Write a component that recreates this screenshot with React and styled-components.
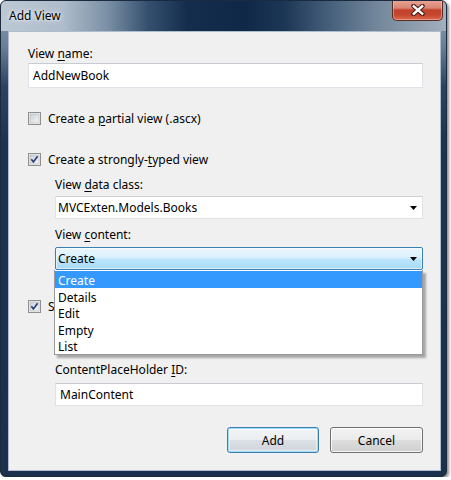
import React from "react";
import styled, { createGlobalStyle } from "styled-components";

const Global = createGlobalStyle`
  html, body { margin: 0; padding: 0; background: #ffffff; }
  body { font-family: "Noto Sans", "Segoe UI", sans-serif; font-size: 12px; color: #000; }
  * { box-sizing: border-box; }
  u { text-decoration-thickness: 1px; text-underline-offset: 2px; }
`;

const Window = styled.div`
  width: 447px;
  height: 477px;
  border: 1px solid #1b2a3c;
  border-radius: 6px;
  display: flex;
  flex-direction: column;
  overflow: hidden;
  background-color: #1c324e;
  background-image: linear-gradient(180deg, #8fa0b2 0px, #6a7f97 45px, #2b4361 85px, #1d3451 140px, #1a304c 100%);
  box-shadow: 2px 2px 3px rgba(0, 0, 0, 0.45);
`;

const TitleBar = styled.div`
  height: 30px;
  flex: none;
  display: flex;
  align-items: flex-start;
  padding-left: 8px;
  padding-right: 3px;
  background-color: #102949;
  background-image: linear-gradient(90deg, #bcc8d4 0%, #aebccb 14%, #7a8fa5 24%, #35506f 33%, #142d4d 42%, #0f2848 55%, #1d3756 64%, #46607c 74%, #71859a 84%, #8e9dad 93%, #a2afbd 100%);
`;

const Title = styled.div`
  margin-top: 7px;
  font-size: 12px;
  line-height: 16px;
  color: #000;
  text-shadow: 0 0 6px rgba(255, 255, 255, 0.9), 0 0 3px rgba(255, 255, 255, 0.9);
`;

const CloseButton = styled.div`
  margin-left: auto;
  margin-top: -1px;
  width: 51px;
  height: 21px;
  border: 1px solid #5a2a24;
  border-top: none;
  border-radius: 0 0 5px 5px;
  background: linear-gradient(180deg, #e9a797 0%, #d88673 40%, #c2412c 50%, #c5472f 75%, #dd6a4f 100%);
  box-shadow: inset 0 0 0 1px rgba(255, 210, 200, 0.45);
  display: flex;
  align-items: center;
  justify-content: center;
`;

const Client = styled.div`
  flex: 1;
  margin: 0 5px 5px 7px;
  background: #f0f0f0;
  border: 1px solid #aebccb;
  padding: 0 17px 0 19px;
  display: flex;
  flex-direction: column;
`;

const Label = styled.div`
  margin-top: ${(p) => p.$mt || 0}px;
  line-height: 15px;
  height: 15px;
  white-space: nowrap;
`;

const TextBox = styled.div`
  margin-top: ${(p) => p.$mt || 0}px;
  height: ${(p) => p.$h || 23}px;
  flex: ${(p) => (p.$grow ? 1 : "none")};
  background: #fff;
  border: 1px solid #dfe3e8;
  border-top-color: #c8ccd2;
  padding-left: 4px;
  display: flex;
  align-items: center;
  white-space: nowrap;
`;

const CheckRow = styled.div`
  margin-top: ${(p) => p.$mt || 0}px;
  height: 15px;
  display: flex;
  align-items: center;
  gap: 7px;
  white-space: nowrap;
  line-height: 15px;
`;

const Indent = styled.div`
  display: flex;
  flex-direction: column;
  padding-left: 27px;
`;

const Combo = styled.div`
  margin-top: ${(p) => p.$mt || 0}px;
  height: 23px;
  background: #fff;
  border: 1px solid #dfe3e8;
  border-top-color: #cdd1d6;
  padding-left: 2px;
  padding-right: 5px;
  display: flex;
  align-items: center;
  justify-content: space-between;
  white-space: nowrap;
`;

const DropWrap = styled.div`
  margin-top: ${(p) => p.$mt || 0}px;
  position: relative;
  z-index: 5;
`;

const FocusCombo = styled.div`
  height: 23px;
  border: 1px solid #3c7fb1;
  border-radius: 2px;
  background: linear-gradient(180deg, #eaf6fd 0%, #d9f0fc 48%, #bee6fd 52%, #a7d9f5 100%);
  box-shadow: inset 0 0 0 1px rgba(255, 255, 255, 0.55);
  padding-left: 2px;
  padding-right: 5px;
  display: flex;
  align-items: center;
  justify-content: space-between;
`;

const DropList = styled.div`
  position: absolute;
  top: 100%;
  left: -1px;
  right: 0;
  background: #fff;
  border: 1px solid #9a9a9a;
  border-top: none;
  box-shadow: 3px 3px 2px rgba(0, 0, 0, 0.3);
  display: flex;
  flex-direction: column;
  padding-top: 1px;
`;

const Item = styled.div`
  height: 16.5px;
  line-height: 15px;
  padding-top: 2px;
  padding-left: 3px;
  background: ${(p) => (p.$sel ? "#3399ff" : "transparent")};
  color: ${(p) => (p.$sel ? "#fff" : "#000")};
`;

const BrowseRow = styled.div`
  margin-top: ${(p) => p.$mt || 0}px;
  display: flex;
  gap: 6px;
`;

const ButtonRow = styled.div`
  margin-top: ${(p) => p.$mt || 0}px;
  display: flex;
  justify-content: flex-end;
  gap: 11px;
`;

const Button = styled.div`
  width: ${(p) => p.$w || 92}px;
  height: ${(p) => p.$h || 26}px;
  border-radius: 3px;
  border: 1px solid ${(p) => (p.$default ? "#3c7fb1" : "#707070")};
  background: ${(p) =>
    p.$default
      ? "linear-gradient(180deg, #f2f5f8 0%, #eaeef2 48%, #dbe0e5 52%, #cfd5db 100%)"
      : "linear-gradient(180deg, #f2f2f2 0%, #ebebeb 48%, #dddddd 52%, #cfcfcf 100%)"};
  box-shadow: ${(p) =>
    p.$default ? "inset 0 0 0 1px #9fdaf5, inset 0 0 0 2px rgba(255,255,255,0.5)" : "inset 0 0 0 1px rgba(255,255,255,0.8)"};
  display: flex;
  align-items: center;
  justify-content: center;
  flex: none;
`;

const Arrow = () => (
  <svg width="7" height="4" viewBox="0 0 7 4">
    <polygon points="0,0 7,0 3.5,4" fill="#000" />
  </svg>
);

const CheckBox = ({ checked }) => (
  <svg width="13" height="13" viewBox="0 0 13 13" style={{ flex: "none" }}>
    <defs>
      <linearGradient id="cbg" x1="0" y1="0" x2="1" y2="1">
        <stop offset="0" stopColor="#cbcfd5" />
        <stop offset="1" stopColor="#f7f7f7" />
      </linearGradient>
    </defs>
    <rect x="0.5" y="0.5" width="12" height="12" fill="#f4f4f4" stroke="#8e8f8f" />
    <rect x="2" y="2" width="9" height="9" fill="url(#cbg)" stroke="#aeb2b8" strokeWidth="0.6" />
    {checked && (
      <path d="M3.3 6.3 L5.4 8.9 L9.6 3.2" fill="none" stroke="#273f7d" strokeWidth="1.7" />
    )}
  </svg>
);

const CloseX = () => (
  <svg width="14" height="12" viewBox="0 0 14 12">
    <path d="M2.5 2 L11.5 10 M11.5 2 L2.5 10" stroke="#4a1b12" strokeWidth="4.4" strokeLinecap="round" />
    <path d="M2.8 2.3 L11.2 9.7 M11.2 2.3 L2.8 9.7" stroke="#ffffff" strokeWidth="2.4" strokeLinecap="square" />
  </svg>
);

export default function App() {
  return (
    <>
      <Global />
      <Window>
        <TitleBar>
          <Title>Add View</Title>
          <CloseButton>
            <CloseX />
          </CloseButton>
        </TitleBar>
        <Client>
          <Label $mt={14}>
            View <u>n</u>ame:
          </Label>
          <TextBox $mt={2} $h={25}>AddNewBook</TextBox>
          <CheckRow $mt={23}>
            <CheckBox />
            <span>
              Create a <u>p</u>artial view (.ascx)
            </span>
          </CheckRow>
          <CheckRow $mt={26}>
            <CheckBox checked />
            <span>
              Create a strongly-<u>t</u>yped view
            </span>
          </CheckRow>
          <Indent>
            <Label $mt={10}>
              View <u>d</u>ata class:
            </Label>
            <Combo $mt={4}>
              <span>MVCExten.Models.Books</span>
              <Arrow />
            </Combo>
            <Label $mt={8}>
              View <u>c</u>ontent:
            </Label>
            <DropWrap $mt={5}>
              <FocusCombo>
                <span>Create</span>
                <Arrow />
              </FocusCombo>
              <DropList>
                <Item $sel>Create</Item>
                <Item>Details</Item>
                <Item>Edit</Item>
                <Item>Empty</Item>
                <Item>List</Item>
              </DropList>
            </DropWrap>
          </Indent>
          <CheckRow $mt={29}>
            <CheckBox checked />
            <span>S</span>
          </CheckRow>
          <Indent>
            <BrowseRow $mt={8}>
              <TextBox $grow />
              <Button $w={30} $h={23} />
            </BrowseRow>
            <Label $mt={17}>
              ContentPlaceHolder <u>I</u>D:
            </Label>
            <TextBox $mt={6}>MainContent</TextBox>
          </Indent>
          <ButtonRow $mt={21}>
            <Button $default>Add</Button>
            <Button $w={93}>Cancel</Button>
          </ButtonRow>
        </Client>
      </Window>
    </>
  );
}
